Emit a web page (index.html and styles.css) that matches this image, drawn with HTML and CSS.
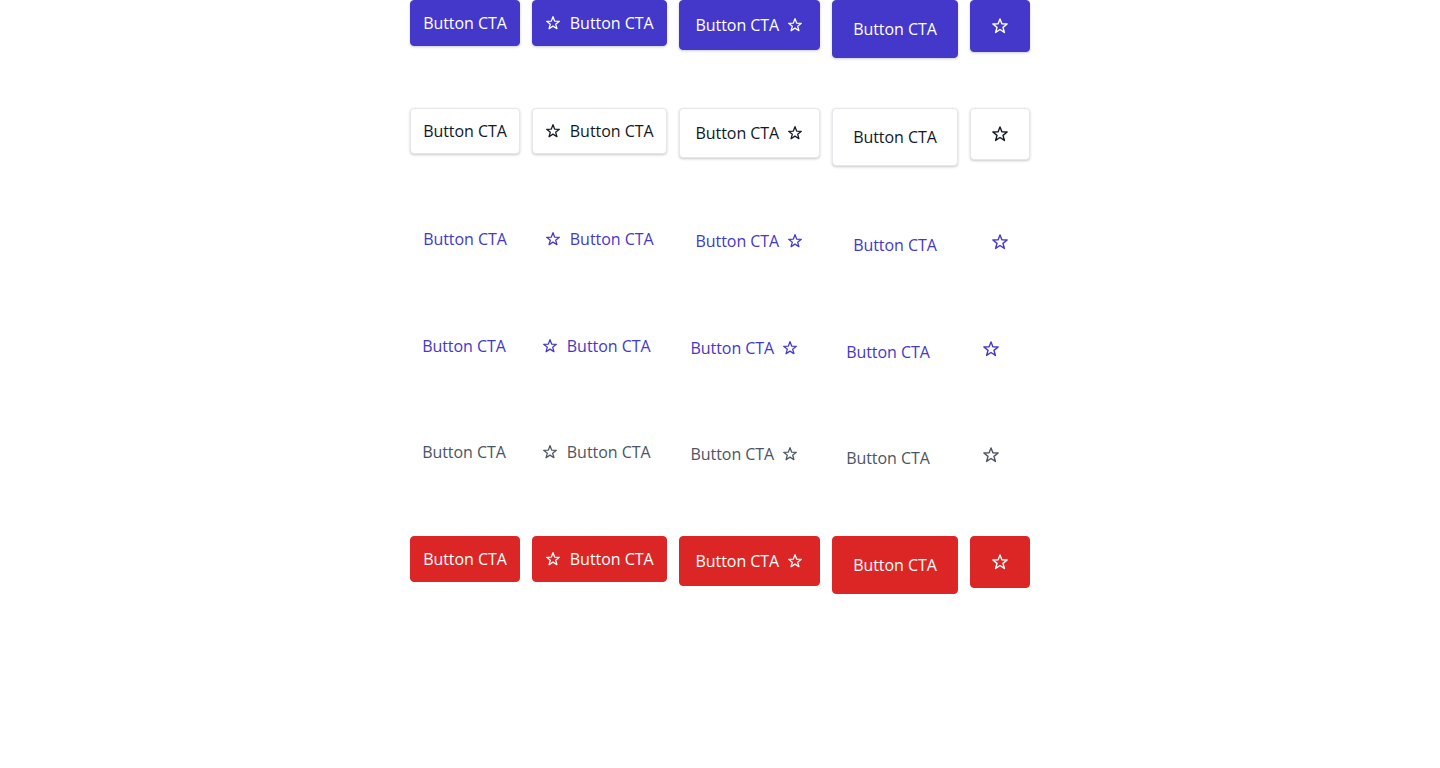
FILE: index.html
```html
<!DOCTYPE html>
<html lang="en">
<head>
<meta charset="utf-8">
<title>Buttons</title>
<link rel="stylesheet" href="styles.css">
</head>
<body>
<svg width="0" height="0" class="defs" aria-hidden="true">
  <defs>
    <symbol id="star" viewBox="0 0 24 24">
      <polygon points="12,2.5 14.47,9.1 21.51,9.41 15.99,13.8 17.88,20.59 12,16.7 6.12,20.59 8.01,13.8 2.49,9.41 9.53,9.1" fill="none" stroke="currentColor" stroke-width="1.9" stroke-linejoin="round"/>
    </symbol>
  </defs>
</svg>
<main class="grid">
  <div class="row primary">
    <button class="btn sm">Button CTA</button>
    <button class="btn sm lead"><svg class="ico"><use href="#star"/></svg>Button CTA</button>
    <button class="btn md">Button CTA<svg class="ico"><use href="#star"/></svg></button>
    <button class="btn lg">Button CTA</button>
    <button class="btn icon"><svg class="ico big"><use href="#star"/></svg></button>
  </div>
  <div class="row secondary">
    <button class="btn sm">Button CTA</button>
    <button class="btn sm lead"><svg class="ico"><use href="#star"/></svg>Button CTA</button>
    <button class="btn md">Button CTA<svg class="ico"><use href="#star"/></svg></button>
    <button class="btn lg">Button CTA</button>
    <button class="btn icon"><svg class="ico big"><use href="#star"/></svg></button>
  </div>
  <div class="row tertiary">
    <button class="btn sm">Button CTA</button>
    <button class="btn sm lead"><svg class="ico"><use href="#star"/></svg>Button CTA</button>
    <button class="btn md">Button CTA<svg class="ico"><use href="#star"/></svg></button>
    <button class="btn lg">Button CTA</button>
    <button class="btn icon"><svg class="ico big"><use href="#star"/></svg></button>
  </div>
  <div class="row link">
    <button class="btn sm">Button CTA</button>
    <button class="btn sm lead"><svg class="ico"><use href="#star"/></svg>Button CTA</button>
    <button class="btn md">Button CTA<svg class="ico"><use href="#star"/></svg></button>
    <button class="btn lg">Button CTA</button>
    <button class="btn icon"><svg class="ico big"><use href="#star"/></svg></button>
  </div>
  <div class="row ghost">
    <button class="btn sm">Button CTA</button>
    <button class="btn sm lead"><svg class="ico"><use href="#star"/></svg>Button CTA</button>
    <button class="btn md">Button CTA<svg class="ico"><use href="#star"/></svg></button>
    <button class="btn lg">Button CTA</button>
    <button class="btn icon"><svg class="ico big"><use href="#star"/></svg></button>
  </div>
  <div class="row danger">
    <button class="btn sm">Button CTA</button>
    <button class="btn sm lead"><svg class="ico"><use href="#star"/></svg>Button CTA</button>
    <button class="btn md">Button CTA<svg class="ico"><use href="#star"/></svg></button>
    <button class="btn lg">Button CTA</button>
    <button class="btn icon"><svg class="ico big"><use href="#star"/></svg></button>
  </div>
</main>
</body>
</html>
```
FILE: styles.css
```css
* { box-sizing: border-box; }
html, body { margin: 0; padding: 0; background: #fff; }
body { font-family: "Open Sans", "Noto Sans", sans-serif; }
.defs { position: absolute; width: 0; height: 0; overflow: hidden; }

.grid {
  width: fit-content;
  margin: 0 auto;
  display: flex;
  flex-direction: column;
  gap: 50px;
}
.row {
  display: flex;
  align-items: flex-start;
  gap: 12px;
}

.btn {
  font-family: inherit;
  font-size: 16px;
  line-height: 24px;
  letter-spacing: -0.05px;
  display: inline-flex;
  align-items: center;
  gap: 8px;
  border: 1px solid transparent;
  border-radius: 4px;
  background: transparent;
  margin: 0;
  cursor: pointer;
  white-space: nowrap;
}
.btn.sm { padding: 10px 12px; }
.btn.lead { gap: 9px; }
.btn.md { padding: 12px 16px; }
.btn.lg { padding: 16px 20px; }
.btn.icon { padding: 16px 20px; }

.ico { width: 16px; height: 16px; flex: none; }
.ico.big { width: 18px; height: 18px; }

.primary .btn {
  background: #4338ca;
  border-color: #4338ca;
  color: #fff;
  box-shadow: 0 1px 3px rgba(0,0,0,0.14), 0 1px 2px rgba(0,0,0,0.08);
}
.secondary .btn {
  background: #fff;
  border-color: #e5e7eb;
  color: #111827;
  box-shadow: 0 1px 3px rgba(0,0,0,0.14), 0 1px 2px rgba(0,0,0,0.08);
}
.tertiary .btn { color: #4338ca; }
.link .btn, .ghost .btn { border: 0; }
.link .btn { color: #4338ca; }
.ghost .btn { color: #4b5563; }
.danger .btn {
  background: #dc2626;
  border-color: #dc2626;
  color: #fff;
}
```
